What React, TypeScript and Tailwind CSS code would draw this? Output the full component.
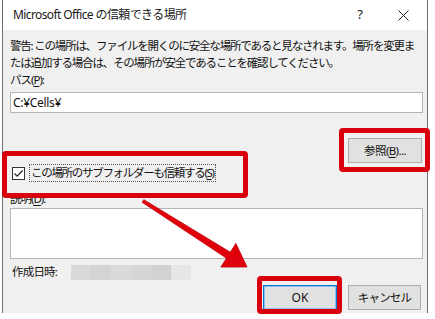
import React from "react";

const jp = { fontFamily: '"Noto Sans", "Noto Sans CJK JP", sans-serif' };

function U({ children }: { children: React.ReactNode }) {
  return <span className="underline underline-offset-2">{children}</span>;
}

export default function App() {
  return (
    <div className="relative w-[435px] h-[319px] bg-white overflow-hidden text-[#000]" style={jp}>
      {/* window */}
      <div className="ml-[2px] w-[426px] border-x border-[#6e6e6e] bg-[#f0f0f0] flex flex-col">
        {/* title bar */}
        <div className="h-[30px] bg-white flex items-center pl-[10px]">
          <span className="text-[12px] tracking-[-0.6px] text-[#1a1a1a]">Microsoft Office の信頼できる場所</span>
          <span className="ml-auto text-[13px] text-[#222] w-[20px] text-center mr-[28px]">?</span>
          <svg width="11" height="11" viewBox="0 0 11 11" className="mr-[18px]">
            <path d="M0.5 0.5 L10.5 10.5 M10.5 0.5 L0.5 10.5" stroke="#222" strokeWidth="1" />
          </svg>
        </div>
        {/* body */}
        <div className="flex flex-col pl-[7px] pr-[4px] pt-[7px] pb-[3px] text-[11.5px] text-[#111]">
          <div className="leading-[17px] whitespace-nowrap tracking-[-1.2px]">
            警告: この場所は、ファイルを開くのに安全な場所であると見なされます。場所を変更ま
            <br />
            たは追加する場合は、その場所が安全であることを確認してください。
          </div>
          <div className="leading-[17px] tracking-[-1px]">
            パス(<U>P</U>):
          </div>
          <div className="mt-[4px] h-[21px] bg-white border border-[#b5b5b5] flex items-center pl-[2px] text-[12px] tracking-[-0.3px]">
            C:¥Cells¥
          </div>
          <div className="mt-[25px] flex justify-end mr-[1px]">
            <div className="w-[74px] h-[25px] bg-[#e1e1e1] border border-[#adadad] flex items-center justify-center text-[11.5px] tracking-[-0.6px]">
              参照(<U>B</U>)...
            </div>
          </div>
          <div className="mt-[1px] h-[18px] flex items-center">
            <div className="ml-[2px] w-[13px] h-[13px] bg-white border border-[#333] flex items-center justify-center">
              <svg width="11" height="11" viewBox="0 0 11 11">
                <path d="M1.5 5.5 L4.2 8.2 L9.5 2.5" stroke="#222" strokeWidth="1.2" fill="none" />
              </svg>
            </div>
            <div className="ml-[4px] h-[18px] px-[1px] border border-dotted border-[#555] flex items-center tracking-[-1.3px]">
              この場所のサブフォルダーも信頼する(<U>S</U>)
            </div>
          </div>
          <div className="mt-[8px] leading-[17px] tracking-[-1px]">
            説明(<U>D</U>):
          </div>
          <div className="mt-[1px] h-[51px] bg-white border border-[#b5b5b5]" />
          <div className="mt-[5px] h-[16px] flex items-center">
            <span className="ml-[2px] tracking-[-0.8px]">作成日時:</span>
            <div className="ml-[14px] h-[15px] flex">
              <div className="w-[20px] bg-[#d9d9d9]" />
              <div className="w-[20px] bg-[#d4d4d4]" />
              <div className="w-[20px] bg-[#dadada]" />
              <div className="w-[20px] bg-[#d6d6d6]" />
              <div className="w-[20px] bg-[#d2d2d2]" />
              <div className="w-[20px] bg-[#e6e6e6]" />
            </div>
          </div>
          <div className="mt-[5px] flex justify-end gap-[11px] mr-[2px]">
            <div className="w-[74px] h-[25px] bg-[#e1e1e1] border border-[#0078d7] shadow-[inset_0_0_0_1px_#8fbfe8] flex items-center justify-center text-[12px]">
              OK
            </div>
            <div className="w-[73px] h-[25px] bg-[#e1e1e1] border border-[#adadad] flex items-center justify-center text-[11.5px] tracking-[-0.8px]">
              キャンセル
            </div>
          </div>
        </div>
      </div>

      {/* red highlight boxes */}
      <div className="absolute left-[339px] top-[128px] w-[91px] h-[44px] border-[5px] border-[#d9000d] rounded-[4px]" />
      <div className="absolute left-[2px] top-[151px] w-[246px] h-[47px] border-[5px] border-[#d9000d] rounded-[4px]" />
      <div className="absolute left-[257px] top-[276px] w-[85px] h-[38px] border-[5px] border-[#d9000d] rounded-[4px]" />

      {/* arrow */}
      <svg className="absolute left-0 top-0" width="435" height="319" viewBox="0 0 435 319">
        <polygon
          points="143.8,199.7 230.3,252.2 235.9,243.4 247,267 220.9,267 226.5,258.2 142.2,202.3"
          fill="#e0000b"
          stroke="#c00008"
          strokeWidth="0.8"
          strokeLinejoin="round"
        />
      </svg>
    </div>
  );
}
